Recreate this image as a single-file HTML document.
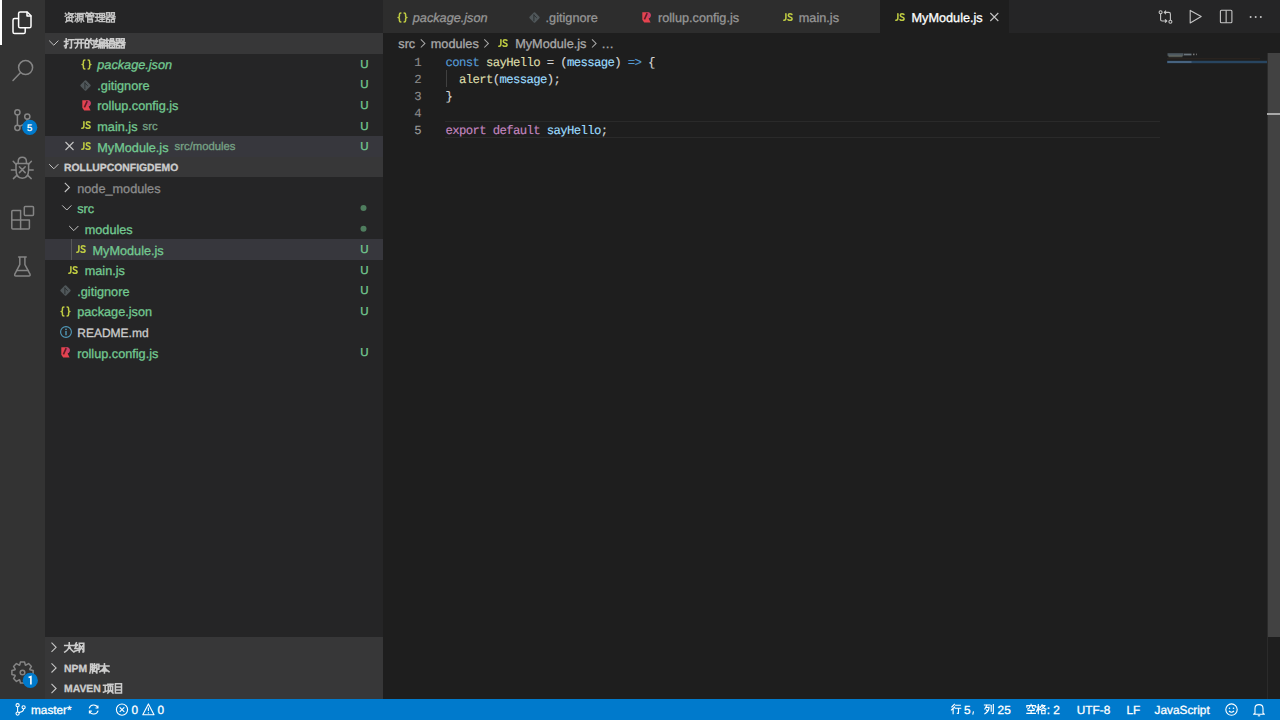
<!DOCTYPE html>
<html><head><meta charset="utf-8">
<style>
*{margin:0;padding:0;box-sizing:border-box}
html,body{width:1280px;height:720px;overflow:hidden;background:#1e1e1e;font-family:"Liberation Sans",sans-serif;text-rendering:geometricPrecision}
.a{position:absolute}
svg{position:absolute;overflow:visible}
.cj{position:absolute}
.t{position:absolute;white-space:nowrap;line-height:1;-webkit-text-stroke:0.3px currentColor}
.code,.ln{position:absolute;font-family:"Liberation Mono",monospace;font-size:12.3px;letter-spacing:-0.63px;line-height:1;white-space:pre;-webkit-text-stroke:0.15px currentColor}
.k{color:#569cd6}.f{color:#dcdcaa}.v{color:#9cdcfe}.p{color:#c586c0}
</style></head><body>

<div class="a" style="left:0;top:0;width:45px;height:699px;background:#333333"></div>
<div class="a" style="left:45px;top:0;width:338px;height:699px;background:#252526"></div>
<div class="a" style="left:383px;top:0;width:897px;height:32.8px;background:#252526"></div>
<div class="a" style="left:0;top:0;width:2px;height:45px;background:#ffffff"></div>
<svg style="left:0;top:0" width="45" height="699" viewBox="0 0 45 699">
<g fill="none" stroke-width="1.5" stroke-linejoin="round" stroke-linecap="round">
 <g stroke="#ffffff">
  <path d="M20.2 12H27.2L31 15.8V26.2Q31 27.8 29.4 27.8H20.2Q18.6 27.8 18.6 26.2V13.6Q18.6 12 20.2 12Z"/>
  <path d="M27 12.2V16H30.8"/>
  <path d="M18.4 18.6H14.6Q13 18.6 13 20.2V32Q13 33.6 14.6 33.6H23.6Q25.2 33.6 25.2 32V28.2"/>
 </g>
 <g stroke="#858585">
  <circle cx="25.6" cy="67.6" r="7"/>
  <path d="M20.6 72.6L13 80.4"/>
  <circle cx="17.4" cy="112.3" r="2.6"/>
  <circle cx="17.4" cy="127.8" r="2.6"/>
  <circle cx="27.3" cy="116.6" r="2.6"/>
  <path d="M17.4 114.9V125.2M27.3 119.2Q27.3 123.8 19.6 126.2"/>
  <path d="M18.2 163.5V161.6Q18.2 157.3 22.2 157.3Q26.4 157.3 26.4 161.6V163.5"/>
  <path d="M16 163.5H28.6V169.8Q28.6 178.2 22.3 178.2Q16 178.2 16 169.8Z"/>
  <path d="M16.2 164.6L13.2 161.2M28.4 164.6L31.4 161.2M16 170H11.4M28.6 170H33.2M16.8 175.4L13.4 178.6M27.8 175.4L31.2 178.6"/>
  <path d="M19.4 166.8L25.2 172.6M25.2 166.8L19.4 172.6"/>
  <path d="M11.8 211.6Q11.8 210.6 12.8 210.6H20.6V219.9H29.4V227.9Q29.4 228.9 28.4 228.9H12.8Q11.8 228.9 11.8 227.9Z"/>
  <path d="M11.8 219.9H20.6V228.9"/>
  <rect x="24.3" y="206.4" width="9.2" height="9.2" rx="1"/>
  <path d="M18.6 257H26.2M19.8 257V264.6L14.8 274.2Q14.2 276 16 276H28.8Q30.6 276 30 274.2L24.9 264.6V257"/>
  <path d="M16.6 270.5H28.2"/>
 </g>
</g>
<g transform="translate(22.5 672.5)" fill="none" stroke="#858585" stroke-width="1.5" stroke-linejoin="round">
 <path d="M7.49 -2.82 L10.61 -2.04 L10.61 2.04 L7.49 2.82 L7.29 3.30 L8.94 6.06 L6.06 8.94 L3.30 7.29 L2.82 7.49 L2.04 10.61 L-2.04 10.61 L-2.82 7.49 L-3.30 7.29 L-6.06 8.94 L-8.94 6.06 L-7.29 3.30 L-7.49 2.82 L-10.61 2.04 L-10.61 -2.04 L-7.49 -2.82 L-7.29 -3.30 L-8.94 -6.06 L-6.06 -8.94 L-3.30 -7.29 L-2.82 -7.49 L-2.04 -10.61 L2.04 -10.61 L2.82 -7.49 L3.30 -7.29 L6.06 -8.94 L8.94 -6.06 L7.29 -3.30Z"/>
 <circle cx="0" cy="0" r="2.3"/>
</g>
<circle cx="29.7" cy="127.4" r="7.6" fill="#007acc"/>
<circle cx="30.3" cy="680.4" r="7.6" fill="#007acc"/>
</svg>
<div class="t" style="left:27.0px;top:123.75px;font-size:9.5px;color:#fff;">5</div>
<svg style="left:0;top:0" width="1" height="1"><path d="M28.6 677.6L30.9 676.6V684.4" fill="none" stroke="#fff" stroke-width="1.6"/></svg>
<svg class="cj" style="left:64px;top:11.5px" width="51.5" height="10.5" viewBox="0 0 51.5 10.5"><g fill="none" stroke="#c4c4c4" stroke-width="1.55" stroke-linecap="square" stroke-linejoin="miter"><path transform="translate(0.00 0) scale(0.8750)" d="M1.5 1.5L2.5 2.5M1.3 5L2.8 4M5.5 0.8L4.5 3M5 2H10.5L9.5 3.5M7.5 2.5Q7 5 4.5 6M7.8 3.5Q9 5.2 11 6M3 6.5H9V10H3ZM6 7.5V9.5M4.5 10L2 11.5M7.5 10L10 11.5"/><path transform="translate(10.30 0) scale(0.8750)" d="M1 1.5L2 2.5M0.8 4.5L1.8 5.5M0.8 10.5L2.2 7.5M3.5 1.5H11.5M3.8 1.5V6Q3.8 9.5 3 11.5M7 1.8L6.5 3M5.5 3H10V7H5.5ZM5.5 5H10M7.8 7.5V11.5M6 8.5L5 10.5M9.5 8.5L10.8 10.5"/><path transform="translate(20.60 0) scale(0.8750)" d="M2.5 0.5L1 2.5M2 1.5H5.5M3.5 1.5L4.5 3M7.5 0.5L6.5 2.5M7 1.5H11M9 1.5L10 3M6 3V4M1.5 5.5V4H10.5V5.5M3.5 5.5H8.5V7.8H3.5M3.5 5.5V11.5M3.5 8.8H9V11.5H3.5"/><path transform="translate(30.90 0) scale(0.8750)" d="M0.8 2H4.5M0.8 6H4.2M0.5 10.5L4.8 9.5M2.6 2V10M5.5 1.5H11V6.5H5.5ZM5.5 4H11M8.25 1.5V11M6 8.5H10.5M5 11H11.5"/><path transform="translate(41.20 0) scale(0.8750)" d="M1.5 0.8H5V3.5H1.5ZM7 0.8H10.5V3.5H7ZM0.5 5.5H11.5M6 3.8Q5 6.5 1 7.5M6 5.5Q7.5 7 11 7.5M9 4L9.8 4.8M1.5 8.5H5V11.5H1.5ZM7 8.5H10.5V11.5H7Z"/></g></svg>
<div class="a" style="left:45px;top:33px;width:338px;height:20.6px;background:#373738"></div>
<svg style="left:0;top:0" width="1" height="1"><path d="M49.2 40.6L53.800000000000004 45.2L58.400000000000006 40.6" fill="none" stroke="#c5c5c5" stroke-width="1.0"/></svg>
<svg class="cj" style="left:64px;top:38px" width="61.2" height="10.5" viewBox="0 0 61.2 10.5"><g fill="none" stroke="#cccccc" stroke-width="1.75" stroke-linecap="square" stroke-linejoin="miter"><path transform="translate(0.00 0) scale(0.8750)" d="M0.5 4H4.5M2.5 0.8V11Q2.5 11.8 1.5 11.2M0.5 9L4.5 6.5M5 2H11.5M8.5 2V11Q8.5 11.8 7 11.2"/><path transform="translate(10.20 0) scale(0.8750)" d="M1.5 1.8H10.5M0.5 5.8H11.5M4.2 1.8V6Q4 10 1.5 11.5M8 1.8V11.5"/><path transform="translate(20.40 0) scale(0.8750)" d="M3 0.8L2.2 2.5M1 2.5H5V11H1ZM1 6.5H5M7.5 0.8L6.2 4M6.8 3H11V10Q11 11.5 9.5 11.2M7.5 5.5L8.8 7.5"/><path transform="translate(30.60 0) scale(0.8750)" d="M2.5 0.8L0.8 4L3.5 4M3.2 3L0.8 7.5H4M0.5 10.5L4 9.5M7.5 0.5L8.3 1.3M5.5 2H11V4.5H5.8M5.8 2V6Q5.8 10 4.8 11.5M7 6H11V11.5M7 6V11.5M9 6V11.5M7 8.5H11"/><path transform="translate(40.80 0) scale(0.8750)" d="M0.5 2.5H4.5M2.5 0.8L1 6.5H4.5M0.5 9H4.8M2.8 4.5V11.5M6.5 0.8H10V3H6.5ZM5.5 4H11V10M5.5 4V10M5.5 6H11M5.5 8H11M5 11.3H11.5M8.5 10V11.5"/><path transform="translate(51.00 0) scale(0.8750)" d="M1.5 0.8H5V3.5H1.5ZM7 0.8H10.5V3.5H7ZM0.5 5.5H11.5M6 3.8Q5 6.5 1 7.5M6 5.5Q7.5 7 11 7.5M9 4L9.8 4.8M1.5 8.5H5V11.5H1.5ZM7 8.5H10.5V11.5H7Z"/></g></svg>
<div class="a" style="left:45px;top:136.0px;width:338px;height:20.6px;background:#37373d"></div>
<svg style="left:80.6px;top:58.60px" width="11" height="11" viewBox="0 0 11 11"><g fill="none" stroke="#bfcc42" stroke-width="1.5" stroke-linecap="round" stroke-linejoin="round"><path d="M3.9 0.9Q2.4 0.9 2.4 2.4V4.2Q2.4 5.5 1.1 5.5Q2.4 5.5 2.4 6.8V8.6Q2.4 10.1 3.9 10.1"/><path d="M7.1 0.9Q8.6 0.9 8.6 2.4V4.2Q8.6 5.5 9.9 5.5Q8.6 5.5 8.6 6.8V8.6Q8.6 10.1 7.1 10.1"/></g></svg>
<div class="t" style="left:97.3px;top:59.25px;font-size:12.7px;color:#73c991;font-style:italic">package.json</div>
<div class="t" style="left:360.3px;top:59.85px;font-size:11.5px;color:#73c991;">U</div>
<svg style="left:80.4px;top:79.6px" width="11" height="11" viewBox="0 0 11 11"><path d="M4.8 0.6Q5.5 -0.1 6.2 0.6L10.4 4.8Q11.1 5.5 10.4 6.2L6.2 10.4Q5.5 11.1 4.8 10.4L0.6 6.2Q-0.1 5.5 0.6 4.8Z" fill="#50575a"/><path d="M4.9 2.4V9.2M4.9 3L7.8 5.9" stroke="#2b2f31" stroke-width="1" fill="none"/></svg>
<div class="t" style="left:97.3px;top:79.85px;font-size:12.7px;color:#73c991;">.gitignore</div>
<div class="t" style="left:360.3px;top:80.45px;font-size:11.5px;color:#73c991;">U</div>
<svg style="left:81.6px;top:99.9px" width="9" height="11" viewBox="0 0 9 11"><path d="M0.3 0.3H5.3Q8.7 0.3 8.7 3.5Q8.7 5.6 6.6 6.5L8.6 10.4H2.2L0.3 7.8Z" fill="#e5434f"/><path d="M5.6 0.3Q8.7 0.3 8.7 3.5Q8.7 5.6 6.6 6.5L5.2 4.2Z" fill="#c8406c"/><path d="M5.2 1.2L2.4 7.4" stroke="#5e1a26" stroke-width="1.6"/></svg>
<div class="t" style="left:97.3px;top:100.45px;font-size:12.7px;color:#73c991;">rollup.config.js</div>
<div class="t" style="left:360.3px;top:101.05px;font-size:11.5px;color:#73c991;">U</div>
<svg style="left:80.6px;top:121.30px" width="10" height="8" viewBox="0 0 10 8"><g fill="none" stroke="#bfcc42" stroke-width="1.55" stroke-linecap="round"><path d="M2.9 0.8V5.1Q2.9 7.2 1.2 7.2H0.8"/><path d="M8.9 1.4Q8.2 0.8 7 0.8Q5.3 0.8 5.3 2.2Q5.3 3.4 7.1 3.9Q9.1 4.4 9.1 5.7Q9.1 7.3 7.1 7.3Q5.8 7.3 5 6.6"/></g></svg>
<div class="t" style="left:97.3px;top:121.05px;font-size:12.7px;color:#73c991;">main.js</div>
<div class="t" style="left:142.5px;top:121.75px;font-size:11.3px;color:#78a386;">src</div>
<div class="t" style="left:360.3px;top:121.65px;font-size:11.5px;color:#73c991;">U</div>
<svg style="left:0;top:0" width="1" height="1"><path d="M65.5 142L73.5 150M73.5 142L65.5 150" stroke="#c5c5c5" stroke-width="1.1"/></svg>
<svg style="left:80.6px;top:141.90px" width="10" height="8" viewBox="0 0 10 8"><g fill="none" stroke="#bfcc42" stroke-width="1.55" stroke-linecap="round"><path d="M2.9 0.8V5.1Q2.9 7.2 1.2 7.2H0.8"/><path d="M8.9 1.4Q8.2 0.8 7 0.8Q5.3 0.8 5.3 2.2Q5.3 3.4 7.1 3.9Q9.1 4.4 9.1 5.7Q9.1 7.3 7.1 7.3Q5.8 7.3 5 6.6"/></g></svg>
<div class="t" style="left:97.3px;top:141.65px;font-size:12.7px;color:#73c991;">MyModule.js</div>
<div class="t" style="left:174.6px;top:142.35px;font-size:11.3px;color:#78a386;">src/modules</div>
<div class="t" style="left:360.3px;top:142.25px;font-size:11.5px;color:#73c991;">U</div>
<div class="a" style="left:45px;top:156.6px;width:338px;height:20.6px;background:#373738"></div>
<svg style="left:0;top:0" width="1" height="1"><path d="M49.2 164.2L53.800000000000004 168.79999999999998L58.400000000000006 164.2" fill="none" stroke="#c5c5c5" stroke-width="1.0"/></svg>
<div class="t" style="left:64px;top:163.50px;font-size:10.4px;color:#cccccc;font-weight:bold">ROLLUPCONFIGDEMO</div>
<div class="a" style="left:45px;top:239.0px;width:338px;height:20.6px;background:#37373d"></div>
<div class="a" style="left:71px;top:239.0px;width:1px;height:20.6px;background:#585858"></div>
<svg style="left:0;top:0" width="1" height="1"><path d="M64.8 182.79999999999998L69.39999999999999 187.39999999999998L64.8 191.99999999999997" fill="none" stroke="#c5c5c5" stroke-width="1.1"/></svg>
<div class="t" style="left:77.25px;top:182.85px;font-size:12.7px;color:#8c8c8c;">node_modules</div>
<svg style="left:0;top:0" width="1" height="1"><path d="M62.2 205.39999999999998L66.8 209.99999999999997L71.4 205.39999999999998" fill="none" stroke="#c5c5c5" stroke-width="1.0"/></svg>
<div class="t" style="left:77.25px;top:203.45px;font-size:12.7px;color:#73c991;">src</div>
<svg style="left:0;top:0" width="1" height="1"><circle cx="363.5" cy="208.1" r="3" fill="#4f7d5e"/><circle cx="363.5" cy="228.7" r="3" fill="#4f7d5e"/></svg>
<svg style="left:0;top:0" width="1" height="1"><path d="M69.2 225.99999999999997L73.8 230.59999999999997L78.4 225.99999999999997" fill="none" stroke="#c5c5c5" stroke-width="1.0"/></svg>
<div class="t" style="left:84.75px;top:224.05px;font-size:12.7px;color:#73c991;">modules</div>
<svg style="left:75.6px;top:245.20px" width="10" height="8" viewBox="0 0 10 8"><g fill="none" stroke="#bfcc42" stroke-width="1.55" stroke-linecap="round"><path d="M2.9 0.8V5.1Q2.9 7.2 1.2 7.2H0.8"/><path d="M8.9 1.4Q8.2 0.8 7 0.8Q5.3 0.8 5.3 2.2Q5.3 3.4 7.1 3.9Q9.1 4.4 9.1 5.7Q9.1 7.3 7.1 7.3Q5.8 7.3 5 6.6"/></g></svg>
<div class="t" style="left:92.5px;top:244.65px;font-size:12.7px;color:#73c991;">MyModule.js</div>
<div class="t" style="left:360.3px;top:245.25px;font-size:11.5px;color:#73c991;">U</div>
<svg style="left:67.5px;top:266.20px" width="10" height="8" viewBox="0 0 10 8"><g fill="none" stroke="#bfcc42" stroke-width="1.55" stroke-linecap="round"><path d="M2.9 0.8V5.1Q2.9 7.2 1.2 7.2H0.8"/><path d="M8.9 1.4Q8.2 0.8 7 0.8Q5.3 0.8 5.3 2.2Q5.3 3.4 7.1 3.9Q9.1 4.4 9.1 5.7Q9.1 7.3 7.1 7.3Q5.8 7.3 5 6.6"/></g></svg>
<div class="t" style="left:84.75px;top:265.25px;font-size:12.7px;color:#73c991;">main.js</div>
<div class="t" style="left:360.3px;top:265.85px;font-size:11.5px;color:#73c991;">U</div>
<svg style="left:59.8px;top:285.0px" width="11" height="11" viewBox="0 0 11 11"><path d="M4.8 0.6Q5.5 -0.1 6.2 0.6L10.4 4.8Q11.1 5.5 10.4 6.2L6.2 10.4Q5.5 11.1 4.8 10.4L0.6 6.2Q-0.1 5.5 0.6 4.8Z" fill="#50575a"/><path d="M4.9 2.4V9.2M4.9 3L7.8 5.9" stroke="#2b2f31" stroke-width="1" fill="none"/></svg>
<div class="t" style="left:77.25px;top:285.85px;font-size:12.7px;color:#73c991;">.gitignore</div>
<div class="t" style="left:360.3px;top:286.45px;font-size:11.5px;color:#73c991;">U</div>
<svg style="left:59.5px;top:305.80px" width="11" height="11" viewBox="0 0 11 11"><g fill="none" stroke="#bfcc42" stroke-width="1.5" stroke-linecap="round" stroke-linejoin="round"><path d="M3.9 0.9Q2.4 0.9 2.4 2.4V4.2Q2.4 5.5 1.1 5.5Q2.4 5.5 2.4 6.8V8.6Q2.4 10.1 3.9 10.1"/><path d="M7.1 0.9Q8.6 0.9 8.6 2.4V4.2Q8.6 5.5 9.9 5.5Q8.6 5.5 8.6 6.8V8.6Q8.6 10.1 7.1 10.1"/></g></svg>
<div class="t" style="left:77.25px;top:306.45px;font-size:12.7px;color:#73c991;">package.json</div>
<div class="t" style="left:360.3px;top:307.05px;font-size:11.5px;color:#73c991;">U</div>
<svg style="left:59.6px;top:326.2px" width="12" height="12" viewBox="0 0 12 12"><circle cx="6" cy="6" r="5.4" fill="none" stroke="#519aba" stroke-width="1.1"/><path d="M6 5V9.2" stroke="#519aba" stroke-width="1.4"/><circle cx="6" cy="3.3" r="0.85" fill="#519aba"/></svg>
<div class="t" style="left:77.25px;top:327.40px;font-size:12.0px;color:#cccccc;">README.md</div>
<svg style="left:61px;top:347.4px" width="9" height="11" viewBox="0 0 9 11"><path d="M0.3 0.3H5.3Q8.7 0.3 8.7 3.5Q8.7 5.6 6.6 6.5L8.6 10.4H2.2L0.3 7.8Z" fill="#e5434f"/><path d="M5.6 0.3Q8.7 0.3 8.7 3.5Q8.7 5.6 6.6 6.5L5.2 4.2Z" fill="#c8406c"/><path d="M5.2 1.2L2.4 7.4" stroke="#5e1a26" stroke-width="1.6"/></svg>
<div class="t" style="left:77.25px;top:347.65px;font-size:12.7px;color:#73c991;">rollup.config.js</div>
<div class="t" style="left:360.3px;top:348.25px;font-size:11.5px;color:#73c991;">U</div>
<div class="a" style="left:45px;top:637.0px;width:338px;height:20.6px;background:#373738"></div>
<svg style="left:0;top:0" width="1" height="1"><path d="M51.5 642.6999999999999L56.1 647.3L51.5 651.9" fill="none" stroke="#c5c5c5" stroke-width="1.1"/></svg>
<div class="a" style="left:45px;top:657.6px;width:338px;height:20.6px;background:#373738"></div>
<svg style="left:0;top:0" width="1" height="1"><path d="M51.5 663.3L56.1 667.9L51.5 672.5" fill="none" stroke="#c5c5c5" stroke-width="1.1"/></svg>
<div class="a" style="left:45px;top:678.2px;width:338px;height:20.799999999999955px;background:#373738"></div>
<svg style="left:0;top:0" width="1" height="1"><path d="M51.5 683.9L56.1 688.5L51.5 693.1" fill="none" stroke="#c5c5c5" stroke-width="1.1"/></svg>
<svg class="cj" style="left:64px;top:642.0px" width="20.4" height="10.5" viewBox="0 0 20.4 10.5"><g fill="none" stroke="#cccccc" stroke-width="1.75" stroke-linecap="square" stroke-linejoin="miter"><path transform="translate(0.00 0) scale(0.8750)" d="M0.8 4H11.2M6 0.8V4Q5.5 9 0.8 11.5M6 4.5Q7.5 9 11.3 11.5"/><path transform="translate(10.20 0) scale(0.8750)" d="M2.5 0.8L0.8 4L3.5 4M3.2 3L0.8 7.5H4M0.5 10.5L4 9.5M5.8 11.5V1.5H11V10.5Q11 11.5 10 11.3M6.5 4L10 9M10 4L6.5 9"/></g></svg>
<div class="t" style="left:64px;top:664.50px;font-size:10.4px;color:#cccccc;font-weight:bold">NPM</div>
<svg class="cj" style="left:89.3px;top:662.6px" width="20.4" height="10.5" viewBox="0 0 20.4 10.5"><g fill="none" stroke="#cccccc" stroke-width="1.75" stroke-linecap="square" stroke-linejoin="miter"><path transform="translate(0.00 0) scale(0.8750)" d="M1 11.5Q1.8 9 1.8 6V1.2H4V11.5M1.8 4.5H4M1.8 7.5H4M4.6 3H8M6.3 1V5.5M4.5 5.5H8.2M6.5 6L5 9.5H8L8.3 10.5M9 1.5H11.3V7H10.3M9 1.5V11.5"/><path transform="translate(10.20 0) scale(0.8750)" d="M0.8 3.5H11.2M6 0.8V11.5M6 4Q4.5 8 0.8 10M6 4Q7.5 8 11.2 10M3.5 9H8.5"/></g></svg>
<div class="t" style="left:64px;top:685.10px;font-size:10.4px;color:#cccccc;font-weight:bold">MAVEN</div>
<svg class="cj" style="left:103.3px;top:683.2px" width="20.4" height="10.5" viewBox="0 0 20.4 10.5"><g fill="none" stroke="#cccccc" stroke-width="1.75" stroke-linecap="square" stroke-linejoin="miter"><path transform="translate(0.00 0) scale(0.8750)" d="M0.5 2.5H4.5M2.5 2.5V9.5M0.5 10.5L4.8 9M5.5 1.5H11.5M8.5 1.5L7.8 3.5M6 3.5H11V9H6ZM8.5 5V8M7.5 9.5L5.5 11.5M9.5 9.5L11.5 11.5"/><path transform="translate(10.20 0) scale(0.8750)" d="M2.5 0.8H9.5V11.5H2.5ZM2.5 4.5H9.5M2.5 8H9.5"/></g></svg>
<div class="a" style="left:383px;top:0;width:497px;height:32.8px;background:#2d2d2d"></div>
<div class="a" style="left:880px;top:0;width:129px;height:32.8px;background:#1e1e1e"></div>
<svg style="left:396.5px;top:11.60px" width="11" height="11" viewBox="0 0 11 11"><g fill="none" stroke="#bfcc42" stroke-width="1.5" stroke-linecap="round" stroke-linejoin="round"><path d="M3.9 0.9Q2.4 0.9 2.4 2.4V4.2Q2.4 5.5 1.1 5.5Q2.4 5.5 2.4 6.8V8.6Q2.4 10.1 3.9 10.1"/><path d="M7.1 0.9Q8.6 0.9 8.6 2.4V4.2Q8.6 5.5 9.9 5.5Q8.6 5.5 8.6 6.8V8.6Q8.6 10.1 7.1 10.1"/></g></svg>
<div class="t" style="left:412.8px;top:12.05px;font-size:12.7px;color:#969696;font-style:italic">package.json</div>
<svg style="left:528.6px;top:11.6px" width="11" height="11" viewBox="0 0 11 11"><path d="M4.8 0.6Q5.5 -0.1 6.2 0.6L10.4 4.8Q11.1 5.5 10.4 6.2L6.2 10.4Q5.5 11.1 4.8 10.4L0.6 6.2Q-0.1 5.5 0.6 4.8Z" fill="#50575a"/><path d="M4.9 2.4V9.2M4.9 3L7.8 5.9" stroke="#2b2f31" stroke-width="1" fill="none"/></svg>
<div class="t" style="left:545.6px;top:12.05px;font-size:12.7px;color:#969696;">.gitignore</div>
<svg style="left:642px;top:11.9px" width="9" height="11" viewBox="0 0 9 11"><path d="M0.3 0.3H5.3Q8.7 0.3 8.7 3.5Q8.7 5.6 6.6 6.5L8.6 10.4H2.2L0.3 7.8Z" fill="#e5434f"/><path d="M5.6 0.3Q8.7 0.3 8.7 3.5Q8.7 5.6 6.6 6.5L5.2 4.2Z" fill="#c8406c"/><path d="M5.2 1.2L2.4 7.4" stroke="#5e1a26" stroke-width="1.6"/></svg>
<div class="t" style="left:658px;top:12.05px;font-size:12.7px;color:#969696;">rollup.config.js</div>
<svg style="left:783.3px;top:13.00px" width="10" height="8" viewBox="0 0 10 8"><g fill="none" stroke="#bfcc42" stroke-width="1.55" stroke-linecap="round"><path d="M2.9 0.8V5.1Q2.9 7.2 1.2 7.2H0.8"/><path d="M8.9 1.4Q8.2 0.8 7 0.8Q5.3 0.8 5.3 2.2Q5.3 3.4 7.1 3.9Q9.1 4.4 9.1 5.7Q9.1 7.3 7.1 7.3Q5.8 7.3 5 6.6"/></g></svg>
<div class="t" style="left:798.8px;top:12.05px;font-size:12.7px;color:#969696;">main.js</div>
<svg style="left:894.7px;top:13.00px" width="10" height="8" viewBox="0 0 10 8"><g fill="none" stroke="#bfcc42" stroke-width="1.55" stroke-linecap="round"><path d="M2.9 0.8V5.1Q2.9 7.2 1.2 7.2H0.8"/><path d="M8.9 1.4Q8.2 0.8 7 0.8Q5.3 0.8 5.3 2.2Q5.3 3.4 7.1 3.9Q9.1 4.4 9.1 5.7Q9.1 7.3 7.1 7.3Q5.8 7.3 5 6.6"/></g></svg>
<div class="t" style="left:911.5px;top:12.05px;font-size:12.7px;color:#ffffff;">MyModule.js</div>
<svg style="left:0;top:0" width="1" height="1"><path d="M990.3 13L998.3 21M998.3 13L990.3 21" stroke="#c5c5c5" stroke-width="1.1"/></svg>
<svg style="left:0;top:0" width="1" height="1"><g fill="none" stroke="#c5c5c5" stroke-width="1.1" stroke-linejoin="round">
<circle cx="1160.6" cy="12.2" r="1.5"/><path d="M1160.6 13.7V19.5Q1160.6 21 1162.1 21H1166.6M1165 19.3L1166.8 21L1165 22.7"/>
<circle cx="1170.4" cy="21.8" r="1.5"/><path d="M1170.4 20.3V14Q1170.4 12.4 1168.9 12.4H1164.4M1166 10.7L1164.2 12.4L1166 14.1"/>
<path d="M1190.2 10.4L1201.2 16.6L1190.2 22.9Z"/>
<rect x="1220.4" y="10.3" width="11.5" height="12.4" rx="1"/><path d="M1226.15 10.3V22.7"/>
</g><g fill="#c5c5c5"><circle cx="1250.6" cy="17" r="1"/><circle cx="1255.7" cy="17" r="1"/><circle cx="1260.8" cy="17" r="1"/></g></svg>
<div class="t" style="left:398.3px;top:38.45px;font-size:12.7px;color:#a9a9a9;">src</div>
<div class="t" style="left:430.8px;top:38.45px;font-size:12.7px;color:#a9a9a9;">modules</div>
<svg style="left:498px;top:39.40px" width="10" height="8" viewBox="0 0 10 8"><g fill="none" stroke="#bfcc42" stroke-width="1.55" stroke-linecap="round"><path d="M2.9 0.8V5.1Q2.9 7.2 1.2 7.2H0.8"/><path d="M8.9 1.4Q8.2 0.8 7 0.8Q5.3 0.8 5.3 2.2Q5.3 3.4 7.1 3.9Q9.1 4.4 9.1 5.7Q9.1 7.3 7.1 7.3Q5.8 7.3 5 6.6"/></g></svg>
<div class="t" style="left:515.2px;top:38.45px;font-size:12.7px;color:#a9a9a9;">MyModule.js</div>
<div class="t" style="left:601.2px;top:38.45px;font-size:12.7px;color:#a9a9a9;">…</div>
<svg style="left:0;top:0" width="1" height="1"><g fill="none" stroke="#a9a9a9" stroke-width="1.05"><path d="M420.8 39.3L424.9 43.4L420.8 47.5M484.3 39.3L488.4 43.4L484.3 47.5M592 39.3L596.1 43.4L592 47.5"/></g></svg>
<div class="ln" style="left:414.2px;top:57.43px;color:#8a8a8a">1</div>
<div class="ln" style="left:414.2px;top:74.23px;color:#8a8a8a">2</div>
<div class="ln" style="left:414.2px;top:91.03px;color:#8a8a8a">3</div>
<div class="ln" style="left:414.2px;top:107.83px;color:#8a8a8a">4</div>
<div class="ln" style="left:414.2px;top:124.63px;color:#9a9a9a">5</div>
<div class="a" style="left:445px;top:120.80px;width:715px;height:16.80px;border-top:1.3px solid #2a2a2a;border-bottom:1.3px solid #2a2a2a"></div>
<div class="a" style="left:445.5px;top:70.40px;width:1px;height:16.80px;background:#404040"></div>
<div class="code" style="left:445.6px;top:57.43px;color:#d4d4d4"><span class="k">const</span> <span class="f">sayHello</span> = (<span class="v">message</span>) <span class="k">=&gt;</span> {</div>
<div class="code" style="left:445.6px;top:74.23px;color:#d4d4d4">  <span class="f">alert</span>(<span class="v">message</span>);</div>
<div class="code" style="left:445.6px;top:91.03px;color:#d4d4d4">}</div>
<div class="code" style="left:445.6px;top:124.63px;color:#d4d4d4"><span class="p">export</span> <span class="p">default</span> <span class="v">sayHello</span>;</div>
<svg style="left:0;top:0" width="1" height="1">
<rect x="1167.5" y="53.2" width="16" height="2.6" fill="#6d7f8c" opacity="0.6"/><rect x="1168.5" y="55.4" width="14" height="1.8" fill="#9aa090" opacity="0.45"/><rect x="1184" y="53.6" width="7.5" height="1.8" fill="#8a9aa5" opacity="0.7"/><rect x="1193" y="53.6" width="1.5" height="1.6" fill="#777"/><rect x="1196" y="53.6" width="1" height="1.6" fill="#666"/>
<rect x="1167" y="58.4" width="93" height="0.8" fill="#3a2c22" opacity="0.7"/>
<rect x="1167" y="60.8" width="100" height="2.4" fill="#284560"/>
<rect x="1167.5" y="61.2" width="24" height="1.6" fill="#6f8aa8" opacity="0.55"/>
</svg>
<div class="a" style="left:1267px;top:53px;width:13px;height:584px;background:#424242"></div>
<div class="a" style="left:1266.5px;top:53px;width:1px;height:646px;background:#2b2b2b"></div>
<div class="a" style="left:1267px;top:113px;width:13px;height:2.4px;background:#a8a8a8"></div>
<div class="a" style="left:0;top:699px;width:1280px;height:21px;background:#007acc"></div>
<svg style="left:0;top:0" width="1" height="1"><g fill="none" stroke="#ffffff" stroke-width="1.1">
<circle cx="17.6" cy="705.2" r="1.6"/><circle cx="17.6" cy="713.6" r="1.6"/><circle cx="23.6" cy="707.3" r="1.6"/>
<path d="M17.6 706.8V712M23.6 708.9Q23.6 711.6 18.8 712.6"/>
<path d="M89.2 708.4A4.6 4.6 0 0 1 97.9 707.9M98.1 710.6A4.6 4.6 0 0 1 89.4 711.1"/>
<path d="M97.9 705.6V708H95.5M89.4 713.6V711.1H91.8"/>
<circle cx="122" cy="709.6" r="5.6"/><path d="M119.7 707.3L124.3 711.9M124.3 707.3L119.7 711.9"/>
<path d="M148.4 703.9L154 714.8H142.8Z" stroke-linejoin="round"/><path d="M148.4 707.5V711"/>
<circle cx="1231.5" cy="709.6" r="5.7"/><path d="M1229 711Q1231.5 713.6 1234 711"/>
<path d="M1255 713.2V708.4Q1255 704.6 1259 704.6Q1263 704.6 1263 708.4V713.2L1264.4 714.2H1253.6Z" stroke-linejoin="round"/><path d="M1257.8 715.8H1260.2"/>
</g><g fill="#fff"><circle cx="148.4" cy="712.9" r="0.65"/><circle cx="1229.5" cy="708.3" r="0.8"/><circle cx="1233.5" cy="708.3" r="0.8"/></g></svg>
<div class="t" style="left:31px;top:704.70px;font-size:11.8px;color:#fff;">master*</div>
<div class="t" style="left:131.5px;top:704.70px;font-size:11.8px;color:#fff;">0</div>
<div class="t" style="left:157.5px;top:704.70px;font-size:11.8px;color:#fff;">0</div>
<svg class="cj" style="left:950.6px;top:704.4px" width="10.0" height="10.2" viewBox="0 0 10.0 10.2"><g fill="none" stroke="#ffffff" stroke-width="1.35" stroke-linecap="square" stroke-linejoin="miter"><path transform="translate(0.00 0) scale(0.8500)" d="M4 0.5L1 3.5M4.2 3.5L0.5 7M2.5 5.5V11.5M5.5 1.5H11M5 5H11.5M8.8 5V10.5Q8.8 11.5 7.5 11"/></g></svg>
<div class="t" style="left:964px;top:704.70px;font-size:11.8px;color:#fff;">5</div>
<svg class="cj" style="left:970.5px;top:704.4px" width="10.0" height="10.2" viewBox="0 0 10.0 10.2"><g fill="none" stroke="#ffffff" stroke-width="1.3" stroke-linecap="square" stroke-linejoin="miter"><path transform="translate(0.00 0) scale(0.8500)" d="M2.8 9.3L2.2 11.8"/></g></svg>
<svg class="cj" style="left:984px;top:704.4px" width="10.0" height="10.2" viewBox="0 0 10.0 10.2"><g fill="none" stroke="#ffffff" stroke-width="1.35" stroke-linecap="square" stroke-linejoin="miter"><path transform="translate(0.00 0) scale(0.8500)" d="M0.5 1.2H7M3.5 1.2L1 6M2.5 4H6Q5.5 9 1 11.5M3 7L4 8M8.5 2V8.5M11 0.8V10.5Q11 11.5 9.8 11.2"/></g></svg>
<div class="t" style="left:997.6px;top:704.70px;font-size:11.8px;color:#fff;">25</div>
<svg class="cj" style="left:1026.3px;top:704.4px" width="20.4" height="10.2" viewBox="0 0 20.4 10.2"><g fill="none" stroke="#ffffff" stroke-width="1.35" stroke-linecap="square" stroke-linejoin="miter"><path transform="translate(0.00 0) scale(0.8500)" d="M6 0.5V1.8M1 3.8V2H11V3.8M4.5 3Q4 5 2 6M7.5 3V4.5Q7.5 5.5 10 6M2.5 7.5H9.5M6 7.5V11M1 11H11"/><path transform="translate(10.20 0) scale(0.8500)" d="M0.5 3.5H4.5M2.5 0.8V11.5M2.5 4L0.5 8.5M2.8 5L4.5 7M7 0.8L5 4M6.8 2H10.2Q9 5 5 6.5M7.5 3.5Q9 5.5 11.5 6M6.5 7.5H10.5V11.5H6.5Z"/></g></svg>
<div class="t" style="left:1046.8px;top:704.70px;font-size:11.8px;color:#fff;">: 2</div>
<div class="t" style="left:1076.8px;top:704.70px;font-size:11.8px;color:#fff;">UTF-8</div>
<div class="t" style="left:1126.5px;top:704.70px;font-size:11.8px;color:#fff;">LF</div>
<div class="t" style="left:1154.6px;top:704.70px;font-size:11.8px;color:#fff;">JavaScript</div>
</body></html>
